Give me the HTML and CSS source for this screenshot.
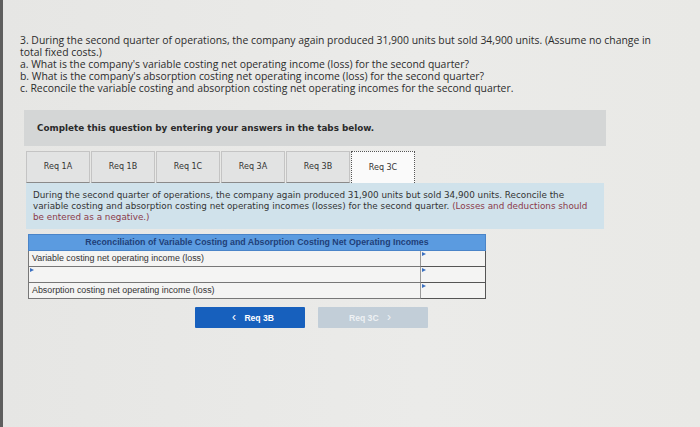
FILE: index.html
```html
<!DOCTYPE html>
<html>
<head>
<meta charset="utf-8">
<link rel="stylesheet" href="styles.css">
</head>
<body>
<div class="page">
  <div class="question">
    <p>3. During the second quarter of operations, the company again produced 31,900 units but sold 34,900 units. (Assume no change in total fixed costs.)</p>
    <p>a. What is the company's variable costing net operating income (loss) for the second quarter?</p>
    <p>b. What is the company's absorption costing net operating income (loss) for the second quarter?</p>
    <p>c. Reconcile the variable costing and absorption costing net operating incomes for the second quarter.</p>
  </div>

  <div class="panel">Complete this question by entering your answers in the tabs below.</div>

  <div class="tabs">
    <div class="tab">Req 1A</div>
    <div class="tab">Req 1B</div>
    <div class="tab">Req 1C</div>
    <div class="tab">Req 3A</div>
    <div class="tab">Req 3B</div>
    <div class="tab active">Req 3C</div>
  </div>

  <div class="instructions">
    During the second quarter of operations, the company again produced 31,900 units but sold 34,900 units. Reconcile the variable costing and absorption costing net operating incomes (losses) for the second quarter. <span class="note">(Losses and deductions should be entered as a negative.)</span>
  </div>

  <table class="recon">
    <tr><th colspan="2">Reconciliation of Variable Costing and Absorption Costing Net Operating Incomes</th></tr>
    <tr><td class="label">Variable costing net operating income (loss)</td><td class="input"></td></tr>
    <tr><td class="label editable"></td><td class="input"></td></tr>
    <tr><td class="label">Absorption costing net operating income (loss)</td><td class="input"></td></tr>
  </table>

  <div class="nav">
    <button class="btn prev"><span class="chev">&#x2039;</span> Req 3B</button>
    <button class="btn next">Req 3C <span class="chev">&#x203A;</span></button>
  </div>
</div>
</body>
</html>
```
FILE: styles.css
```css
html, body {
  margin: 0;
  padding: 0;
}
body {
  background: #e9e9e7;
  width: 700px;
  height: 427px;
  overflow: hidden;
}
.page {
  border-left: 3px solid #5e5e5e;
  height: 427px;
  box-sizing: border-box;
  padding-top: 35px;
  background: linear-gradient(90deg, #e6e6e4 0%, #ebebe9 60%, #e9e9e6 100%);
}
.question {
  font-family: "Open Sans", "Liberation Sans", sans-serif;
  font-size: 10.4px;
  line-height: 11.9px;
  color: #2c2c2c;
  padding-left: 17px;
  width: 650px;
}
.question p {
  margin: 0;
}
.panel {
  margin: 15px 0 0 21px;
  width: 569px;
  height: 36px;
  background: #d4d6d6;
  font-family: "DejaVu Sans", sans-serif;
  font-weight: bold;
  font-size: 8.8px;
  color: #2a2a2a;
  padding-left: 13px;
  display: flex;
  align-items: center;
}
.tabs {
  display: flex;
  margin: 5px 0 0 23px;
  height: 32px;
}
.tab {
  width: 64px;
  height: 32px;
  box-sizing: border-box;
  border: 1px solid #c4c4c4;
  border-bottom: 1px solid #8a8a8a;
  background: #e2e3e3;
  font-family: "DejaVu Sans", sans-serif;
  font-size: 8px;
  color: #333;
  display: flex;
  align-items: center;
  justify-content: center;
  margin-right: 1px;
}
.tab.active {
  background: #fafafa;
  border: 1px dotted #555;
  border-bottom: none;
}
.instructions {
  margin-left: 23px;
  width: 564px;
  background: #d0e2eb;
  padding: 7px 7px 6px 7px;
  font-family: "DejaVu Sans", sans-serif;
  font-size: 8.8px;
  line-height: 11px;
  color: #333;
}
.note {
  color: #8b3a4a;
}
.recon {
  margin: 5px 0 0 25px;
  border-collapse: collapse;
  width: 458px;
  font-family: "Liberation Sans", Arial, sans-serif;
  font-size: 8.9px;
}
.recon th {
  background: #5b9be0;
  color: #1f3f78;
  font-weight: bold;
  font-size: 8.8px;
  height: 15px;
  padding: 0;
  border: 1px solid #4a84c8;
}
.recon td {
  height: 15px;
  padding: 0 3px;
  border: 1px solid #777;
  background: #f4f4f3;
  color: #333;
}
.recon td.label {
  border-right: 1px solid #999;
}
.recon td.editable {
  position: relative;
}
.recon td.input {
  width: 58px;
  border: 1px solid #555;
  position: relative;
}
.recon td.input::before,
.recon td.editable::before {
  content: "";
  position: absolute;
  left: 1px;
  top: 1px;
  border-left: 4px solid #3a6fc0;
  border-top: 2px solid transparent;
  border-bottom: 2px solid transparent;
}
.nav {
  display: flex;
  margin: 8px 0 0 192px;
  gap: 13px;
}
.btn {
  width: 110px;
  height: 21px;
  border: none;
  border-radius: 1px;
  font-family: "Liberation Sans", Arial, sans-serif;
  font-weight: bold;
  font-size: 8.6px;
  padding: 0;
}
.btn.prev {
  background: #1760bd;
  color: #fff;
}
.btn.next {
  background: #c2ced8;
  color: #eef1f4;
}
.chev {
  font-size: 12px;
  margin: 0 6px;
  font-weight: normal;
}
```
